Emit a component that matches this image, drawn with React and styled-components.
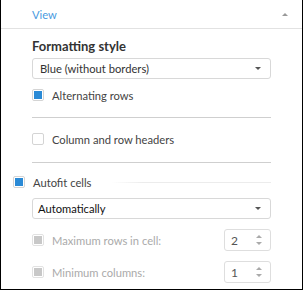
import React from 'react'
import styled, { createGlobalStyle } from 'styled-components'

const Global = createGlobalStyle`
  html, body {
    margin: 0;
    padding: 0;
    background: #fff;
  }
  * {
    box-sizing: border-box;
  }
`

const Panel = styled.div`
  width: 303px;
  height: 290px;
  border: 1px solid #000;
  border-top: none;
  background: #fff;
  font-family: Lato, 'Open Sans', sans-serif;
  font-size: 11.2px;
  color: #444;
  overflow: hidden;
`

const Header = styled.div`
  height: 29px;
  display: flex;
  align-items: center;
  justify-content: space-between;
  padding: 0 14px 0 31px;
  border-bottom: 1px solid #e2e2e2;
  color: #4a9ae0;
`

const Caret = styled.span`
  width: 0;
  height: 0;
  border-left: 3px solid transparent;
  border-right: 3px solid transparent;
  border-bottom: ${p => (p.$down ? 'none' : '3px solid #999')};
  border-top: ${p => (p.$down ? '3px solid #555' : 'none')};
`

const Body = styled.div`
  display: flex;
  flex-direction: column;
  padding: 9px 31px 0 31px;
`

const Title = styled.div`
  font-weight: bold;
  font-size: 13px;
  color: #333;
  line-height: 16px;
`

const Select = styled.div`
  height: 21px;
  margin-top: ${p => p.$mt || 4}px;
  border: 1px solid #d8d8d8;
  border-radius: 3px;
  display: flex;
  align-items: center;
  justify-content: space-between;
  padding: 0 9px 0 ${p => p.$pl || 7}px;
  color: ${p => p.$dark ? '#111' : '#333'};
`

const Row = styled.div`
  display: flex;
  align-items: center;
  height: ${p => p.$h || 16}px;
  margin-top: ${p => p.$mt || 0}px;
  margin-left: ${p => p.$ml || 0}px;
`

const Box = styled.span`
  width: 12px;
  height: 12px;
  border: 1px solid ${p => (p.$disabled ? '#e2e2e2' : '#d4d4d4')};
  border-radius: 2px;
  display: flex;
  align-items: center;
  justify-content: center;
  margin-right: 8px;
  flex: none;
  &::after {
    content: '';
    width: 8px;
    height: 8px;
    display: ${p => (p.$checked ? 'block' : 'none')};
    background: ${p => (p.$disabled ? '#c8c8c8' : '#2a8ad6')};
  }
`

const Label = styled.span`
  color: ${p => (p.$disabled ? '#aaa' : '#444')};
  white-space: nowrap;
`

const Rule = styled.div`
  height: 1px;
  background: #cfcfcf;
  margin-top: ${p => p.$mt}px;
`

const Fade = styled.div`
  flex: 1;
  height: 1px;
  margin-left: 20px;
  background: linear-gradient(to right, #fff, #ececec 20%, #ececec);
`

const Spin = styled.div`
  margin-left: auto;
  width: 47px;
  height: 22px;
  border: 1px solid #dedede;
  border-radius: 3px;
  display: flex;
  align-items: center;
  justify-content: space-between;
  padding: 0 8px 0 6px;
  color: #555;
  font-size: 12px;
`

const Arrows = styled.span`
  display: flex;
  flex-direction: column;
  gap: 4px;
`

const SpinArrow = styled.span`
  width: 0;
  height: 0;
  border-left: 3px solid transparent;
  border-right: 3px solid transparent;
  border-bottom: ${p => (p.$down ? 'none' : '3px solid #aaa')};
  border-top: ${p => (p.$down ? '3px solid #aaa' : 'none')};
`

const Spinner = ({ value }) => (
  <Spin>
    <span>{value}</span>
    <Arrows>
      <SpinArrow />
      <SpinArrow $down />
    </Arrows>
  </Spin>
)

export default function App() {
  return (
    <>
      <Global />
      <Panel>
        <Header>
          <span>View</span>
          <Caret />
        </Header>
        <Body>
          <Title>Formatting style</Title>
          <Select>
            <span>Blue (without borders)</span>
            <Caret $down />
          </Select>
          <Row $mt={8}>
            <Box $checked />
            <Label>Alternating rows</Label>
          </Row>
          <Rule $mt={14} />
          <Row $mt={13}>
            <Box />
            <Label>Column and row headers</Label>
          </Row>
          <Rule $mt={15} />
          <Row $mt={11} $ml={-19}>
            <Box $checked />
            <Label>Autofit cells</Label>
            <Fade />
          </Row>
          <Select $mt={8} $pl={5} $dark>
            <span>Automatically</span>
            <Caret $down />
          </Select>
          <Row $h={22} $mt={10}>
            <Box $checked $disabled />
            <Label $disabled>Maximum rows in cell:</Label>
            <Spinner value="2" />
          </Row>
          <Row $h={22} $mt={10}>
            <Box $checked $disabled />
            <Label $disabled>Minimum columns:</Label>
            <Spinner value="1" />
          </Row>
        </Body>
      </Panel>
    </>
  )
}
